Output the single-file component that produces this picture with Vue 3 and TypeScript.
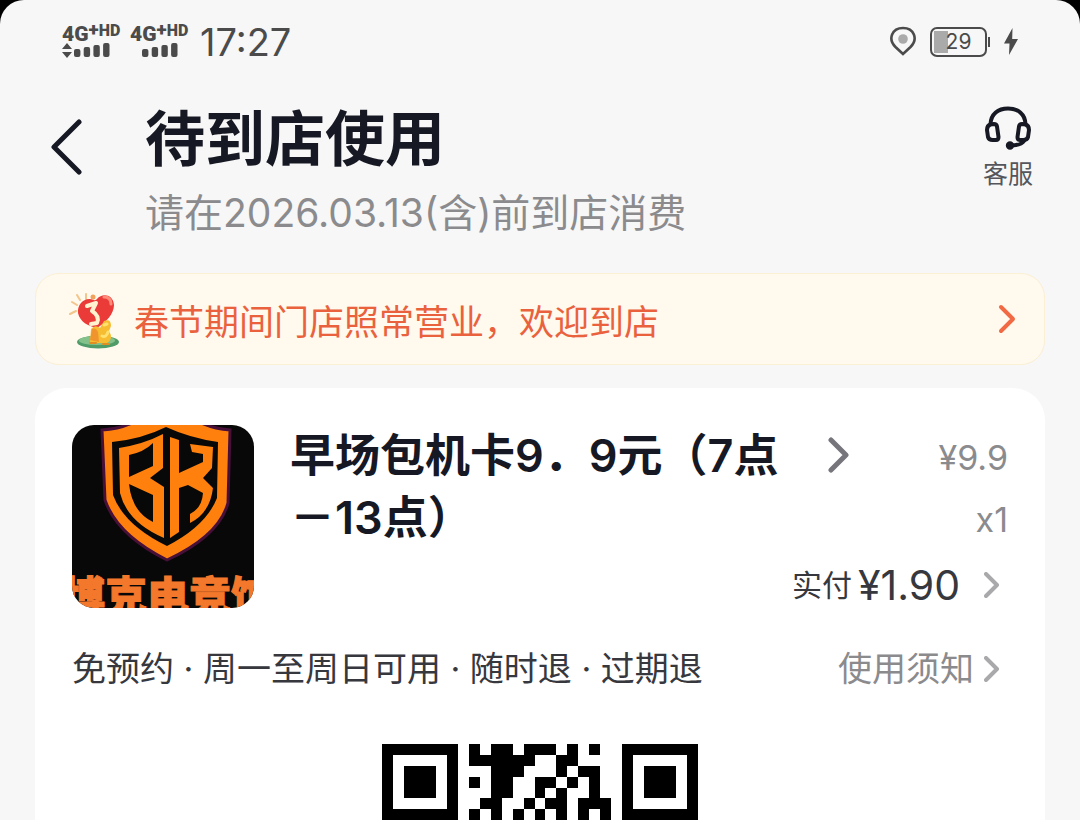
<script setup lang="ts">
const tags: string[] = ['免预约', '周一至周日可用', '随时退', '过期退']
const moduleRows: string[] = [
  '11111110101101110101001111111',
  '10000010111111001100001000001',
  '10111010001110001011001011101',
  '10111010101100110101001011101',
  '10111010001100101001001011101',
  '10000010011001011011101000001',
  '11111110101010101010101111111',
  '00000000101000011010100000000',
]
const modules = moduleRows.flatMap((row, y) =>
  [...row].flatMap((cell, x) => (cell === '1' ? [{ x, y }] : [])),
)
const bars = [0, 1, 2, 3]
</script>

<template>
  <div class="backdrop">
    <main class="screen">
      <div class="status">
        <div class="status-left">
          <div v-for="sim in 2" :key="sim" class="sim">
            <div class="net"><b>4G</b><b class="plus">+</b><b class="hd">HD</b></div>
            <svg width="58" height="17" viewBox="0 0 58 17" fill="#4b4b4b">
              <path v-if="sim === 1" d="M5 0 10 6H0ZM5 15 0 9H10Z" />
              <rect
                v-for="i in bars"
                :key="i"
                :x="12 + i * 9.7"
                :y="6 - i * 2"
                width="6.4"
                :height="8 + i * 2"
                rx="2"
              />
            </svg>
          </div>
          <time class="clock">17:27</time>
        </div>
        <div class="status-right">
          <svg width="26" height="32" viewBox="0 0 26 32">
            <path d="M13 28 5.500 21C-2.500 13 2 2 13 2S28.500 13 20.500 21Z" fill="none" stroke="#4b4b4b" stroke-width="2.600" />
            <circle cx="13" cy="13" r="4.800" fill="#aaa" />
          </svg>
          <div class="battery">
            <span>29</span>
          </div>
          <svg class="bolt" width="14" height="28" viewBox="0 0 14 28" fill="#4b4b4b">
            <path d="M8.500 0 0 15.500H5.500L5 27 14 11H8.200Z" />
          </svg>
        </div>
      </div>

      <header class="header">
        <button class="back" aria-label="返回">
          <svg width="32" height="56" viewBox="0 0 32 56" fill="none" stroke="#161823" stroke-width="5" stroke-linecap="round" stroke-linejoin="round">
            <path d="M29 3 4 28 29 53" />
          </svg>
        </button>
        <div class="heading">
          <h1>待到店使用</h1>
          <p>请在2026.03.13(含)前到店消费</p>
        </div>
        <button class="service">
          <svg width="46" height="44" viewBox="0 0 46 44" fill="none" stroke="#161823" stroke-width="4" stroke-linecap="round" stroke-linejoin="round">
            <path d="M5.500 18C6 8 13 2.500 23 2.500S40 8 40.500 18" />
            <path d="M5.500 18.500 9 18Q11.500 18 12 20.500L13.500 31Q13.500 34 11 34L7.500 34Q4 34 3 31L2 24Q2 19.500 5.500 18.500Z" />
            <path d="M40.500 18.500 37 18Q34.500 18 34 20.500L32.500 31Q32.500 34 35 34L38.500 34Q42 34 43 31L44 24Q44 19.500 40.500 18.500Z" />
            <path d="M39 35Q36 39.500 25 39.500" />
            <circle cx="25" cy="39.500" r="2.200" fill="#161823" />
          </svg>
          <span>客服</span>
        </button>
      </header>

      <a class="notice" href="#notice">
        <svg class="mascot" width="54" height="60" viewBox="0 0 54 60">
          <ellipse cx="29" cy="50" rx="21" ry="6.500" fill="#4f9c69" />
          <ellipse cx="28" cy="48.500" rx="18" ry="4.500" fill="#83c18b" />
          <g stroke="#f3c58a" stroke-width="2" stroke-linecap="round">
            <path d="M3 10 8 13M8 3 11 8M17 2V7M1 22 7 19" />
          </g>
          <path d="M25 8C16 4 8 12 9 21 11 30 19 34 28 36 37 30 45 22 45 13 44 2 33 1 28 7Q26 9 25 8Z" fill="#ea3b39" />
          <path d="M35 5Q42 5 42 12" fill="none" stroke="#ff8c79" stroke-width="3" stroke-linecap="round" />
          <path d="M18 14 27 11 23 19Q31 24 28 31L22 32" fill="none" stroke="#fff2cf" stroke-width="4" stroke-linecap="round" stroke-linejoin="round" />
          <circle cx="24" cy="5" r="2.500" fill="#f1a25d" />
          <path d="M21 50 22 37Q26 32 31 36L35 29Q42 26 42 34L40 39Q45 47 38 51L23 51Z" fill="#f6bc32" />
          <path d="M21 48 23 37Q27 35 29 40L30 50Z" fill="#f0952d" />
          <path d="M33 44Q37 46 39 40M35 33 38 32" fill="none" stroke="#ffe170" stroke-width="3" stroke-linecap="round" />
          <path d="M21 51H27M34 52H40" stroke="#df8e22" stroke-width="2" stroke-linecap="round" />
        </svg>
        <span>春节期间门店照常营业，欢迎到店</span>
        <svg class="notice-arrow" width="18" height="30" viewBox="0 0 18 30" fill="none" stroke="#f16a43" stroke-width="4" stroke-linecap="round" stroke-linejoin="round">
          <path d="M3 3 15 15 3 27" />
        </svg>
      </a>

      <section class="card">
        <div class="product">
          <div class="logo">
            <svg viewBox="0 0 182 183" role="img" aria-label="BK">
              <rect width="182" height="183" fill="#080808" />
              <path d="M30 5Q48 4 62-3H127Q142 4 158 5L156 78Q147 111 95 135 45 110 33 75Z" fill="#ff800d" stroke="#481039" stroke-width="3" />
              <path d="M40 17Q70 14 94 2 118 13 146 17L145 73Q134 101 95 121 52 100 41 70Z" fill="#080808" />
              <path fill="#ff800d" fill-rule="evenodd" d="M47 23Q72 19 91 9V43L78 53 92 62V113Q55 97 48 68ZM57 30Q72 27 81 18V41L57 52ZM57 59 81 70V97Q60 87 57 59Z" />
              <path fill="#ff800d" d="M98 12 107 15V48L131 37V29L120 27 118 19 141 22 140 43 131 53 141 63Q138 88 118 98V89Q130 83 131 68L116 60 107 63V107L98 113Z" />
              <text x="96" y="187" text-anchor="middle">博克电竞馆</text>
            </svg>
          </div>
          <div class="details">
            <div class="title-row">
              <h2>早场包机卡9．9元（7点－13点）</h2>
              <svg class="title-arrow" width="22" height="36" viewBox="0 0 22 36" fill="none" stroke="#75757b" stroke-width="5" stroke-linecap="round" stroke-linejoin="round">
                <path d="M3 3 18 18 3 33" />
              </svg>
              <div class="price"><span>¥9.9</span><span>x1</span></div>
            </div>
            <button class="paid">
              <span>实付</span><strong>¥1.90</strong>
              <svg class="chevron" width="16" height="26" viewBox="0 0 16 26"><path d="M2 2 13 13 2 24" /></svg>
            </button>
          </div>
        </div>
        <div class="rules">
          <p>{{ tags.join(' · ') }}</p>
          <button class="terms">
            <span>使用须知</span>
            <svg class="chevron" width="16" height="26" viewBox="0 0 16 26"><path d="M2 2 13 13 2 24" /></svg>
          </button>
        </div>
        <svg class="qr" viewBox="0 0 29 8" role="img" aria-label="二维码" shape-rendering="crispEdges">
          <rect v-for="m in modules" :key="`${m.x}-${m.y}`" :x="m.x" :y="m.y" width="1" height="1" />
        </svg>
      </section>
    </main>
  </div>
</template>

<style>
body {
  margin: 0;
}
</style>

<style scoped>
* {
  box-sizing: border-box;
}
.backdrop {
  height: 100vh;
  overflow: hidden;
  background: #000;
  color: #161823;
  font-family: Inter, "Noto Sans CJK SC", sans-serif;
}
.screen {
  min-height: 100%;
  padding: 20px 35px 0;
  border-radius: 24px 24px 0 0;
  background: #f7f7f7;
}
h1, h2, p {
  margin: 0;
}
button {
  padding: 0;
  border: 0;
  background: none;
  color: inherit;
  font: inherit;
  cursor: pointer;
}
svg {
  display: block;
  flex: none;
}
.status,
.status-left,
.status-right,
.net {
  display: flex;
  align-items: center;
}
.status {
  justify-content: space-between;
  height: 44px;
  padding: 0 27px 0 27px;
  color: #4b4b4b;
}
.status-left {
  gap: 8px;
}
.sim {
  width: 60px;
}
.net {
  height: 18px;
  font-family: Roboto, sans-serif;
  font-size: 21px;
  line-height: 18px;
}
.net b {
  font-weight: 900;
}
.net .plus {
  font-size: 19px;
  line-height: 10px;
  align-self: flex-start;
}
.net .hd {
  align-self: flex-start;
  font-size: 16px;
  line-height: 12px;
}
.clock {
  margin-left: 2px;
  font-size: 38px;
  line-height: 44px;
}
.status-right {
  gap: 14px;
}
.battery {
  position: relative;
  width: 57px;
  height: 30px;
  border: 2px solid #4b4b4b;
  border-radius: 7px;
  background: linear-gradient(#aaa, #aaa) 2px 2px / 14px 22px no-repeat;
  font-size: 21px;
  line-height: 26px;
  text-align: center;
}
.battery::after {
  position: absolute;
  top: 8px;
  right: -5px;
  width: 2px;
  height: 10px;
  background: #4b4b4b;
  content: "";
}
.bolt {
  margin-left: 3px;
}
.header {
  display: flex;
  align-items: flex-start;
  padding: 36px 12px 0 15px;
}
.back {
  margin-top: 19px;
}
.heading {
  flex: 1;
  margin-left: 63px;
}
h1 {
  font-size: 60px;
  font-weight: 700;
  line-height: 78px;
}
.heading p {
  color: #8b8b8e;
  font-size: 39px;
  line-height: 70px;
}
.service {
  display: flex;
  flex-direction: column;
  align-items: center;
  margin-top: 6px;
  color: #55565c;
  font-size: 25px;
  line-height: 40px;
}
.service span {
  margin-top: 4px;
}
.notice {
  display: flex;
  align-items: center;
  height: 92px;
  margin-top: 25px;
  padding: 0 28px 0 33px;
  border: 1px solid #fbefd4;
  border-radius: 24px;
  background: #fff9ee;
  color: #e9623d;
  font-size: 35px;
  text-decoration: none;
}
.mascot {
  margin-top: 6px;
}
.notice span {
  flex: 1;
  margin-left: 11px;
  white-space: nowrap;
}
.card {
  margin-top: 23px;
  padding: 37px;
  border-radius: 32px;
  background: #fff;
}
.product {
  display: flex;
}
.logo {
  flex: none;
  width: 182px;
  height: 183px;
  overflow: hidden;
  border-radius: 22px;
}
.logo text {
  fill: #f3782b;
  stroke: #f3782b;
  stroke-width: 1px;
  font-family: "Noto Sans CJK SC", sans-serif;
  font-size: 42px;
  font-weight: 900;
}
.details {
  flex: 1;
  margin-left: 36px;
}
.title-row {
  display: flex;
  align-items: flex-start;
}
h2 {
  width: 500px;
  font-size: 45px;
  font-weight: 600;
  line-height: 62px;
}
.title-arrow {
  margin: 12px 0 0 38px;
}
.price {
  display: flex;
  flex: 1;
  flex-direction: column;
  align-items: flex-end;
  padding-top: 2px;
  color: #8b8b8e;
  font-size: 34px;
  line-height: 62px;
}
.paid {
  display: flex;
  align-items: center;
  margin: 6px 8px 0 auto;
  color: #37383e;
  font-size: 30px;
  line-height: 56px;
}
.paid strong {
  margin: 0 24px 0 6px;
  font-size: 41px;
  font-weight: 400;
}
.chevron {
  fill: none;
  stroke: #a9a9ac;
  stroke-width: 4px;
  stroke-linecap: round;
  stroke-linejoin: round;
}
.rules {
  display: flex;
  align-items: center;
  justify-content: space-between;
  margin-top: 26px;
  padding-right: 8px;
  color: #37383e;
  font-size: 34px;
  line-height: 60px;
  white-space: nowrap;
}
.terms {
  display: flex;
  align-items: center;
  gap: 10px;
  color: #8b8b8e;
}
.qr {
  width: 316px;
  margin: 45px auto 0;
}
</style>
